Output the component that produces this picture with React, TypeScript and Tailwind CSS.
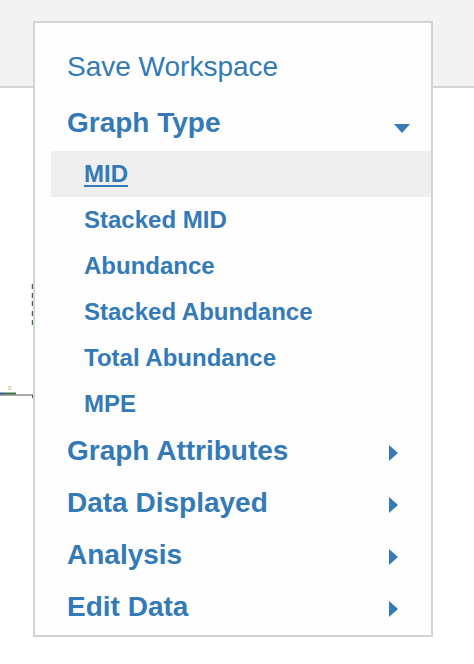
import React from "react";

const CaretDown = () => (
  <svg width="16" height="9" viewBox="0 0 16 9" className="shrink-0">
    <polygon points="0,0 16,0 8,9" fill="#337ab7" />
  </svg>
);

const CaretRight = () => (
  <svg width="9" height="16" viewBox="0 0 9 16" className="shrink-0">
    <polygon points="0,0 9,8 0,16" fill="#337ab7" />
  </svg>
);

const subItems = [
  "MID",
  "Stacked MID",
  "Abundance",
  "Stacked Abundance",
  "Total Abundance",
  "MPE",
];

const mainItems = ["Graph Attributes", "Data Displayed", "Analysis", "Edit Data"];

export default function App() {
  return (
    <div
      className="relative w-[474px] h-[664px] bg-white overflow-hidden"
      style={{ fontFamily: '"Liberation Sans", Arial, sans-serif' }}
    >
      <div className="h-[88px] bg-[#f3f3f3] border-b-2 border-[#d6d6d6]" />
      <div className="pt-[182px]">
        <svg width="40" height="320" viewBox="0 0 40 320" className="block">
          <g stroke="#4d5b6b" strokeWidth="1.5">
            <line x1="32.5" y1="14" x2="32.5" y2="19" />
            <line x1="32.5" y1="23" x2="32.5" y2="28" />
            <line x1="32.5" y1="31" x2="32.5" y2="36" />
            <line x1="32.5" y1="41" x2="32.5" y2="46" />
          </g>
          <line x1="32.5" y1="50" x2="32.5" y2="55" stroke="#3f7a3f" strokeWidth="1.5" />
          <line x1="0" y1="125" x2="33" y2="125" stroke="#555" strokeWidth="1" />
          <line x1="32.5" y1="125" x2="32.5" y2="128" stroke="#555" strokeWidth="1" />
          <rect x="0" y="122.5" width="6" height="2" fill="#3b5f8a" />
          <rect x="6" y="122.5" width="10" height="2" fill="#3f7a3f" />
          <text x="8" y="120" fontSize="6" fill="#c9a04a" fontFamily="Liberation Sans, Arial, sans-serif">0</text>
        </svg>
      </div>

      <div className="absolute left-[33px] top-[21px] w-[400px] border-2 border-[#d3d3d3] bg-[#fefefe] pt-[14px] pb-[4px] text-[#337ab7]">
        <div className="pl-[32px] h-[56px] leading-[60px] text-[28px] font-normal whitespace-nowrap">
          Save Workspace
        </div>
        <div className="flex pl-[32px] pr-[21px] h-[56px]">
          <span className="leading-[60px] h-[56px] text-[28px] font-bold whitespace-nowrap">Graph Type</span>
          <span className="ml-auto mt-[31px]">
            <CaretDown />
          </span>
        </div>
        <div className="mt-[2px] ml-[16px]">
          {subItems.map((s, i) => (
            <div
              key={s}
              className={
                i === 0
                  ? "h-[46px] leading-[46px] pl-[33px] text-[24px] font-bold bg-[#efefef] whitespace-nowrap"
                  : "h-[46px] leading-[46px] pl-[33px] text-[24px] font-bold whitespace-nowrap"
              }
            >
              {i === 0 ? (
                <span className="underline decoration-2 underline-offset-[3px]">{s}</span>
              ) : (
                s
              )}
            </div>
          ))}
        </div>
        <div className="-mt-[4px]">
          {mainItems.map((m) => (
            <div key={m} className="flex pl-[32px] pr-[33px] h-[52px]">
              <span className="leading-[56px] h-[52px] text-[28px] font-bold whitespace-nowrap">{m}</span>
              <span className="ml-auto mt-[22px]">
                <CaretRight />
              </span>
            </div>
          ))}
        </div>
      </div>
    </div>
  );
}
